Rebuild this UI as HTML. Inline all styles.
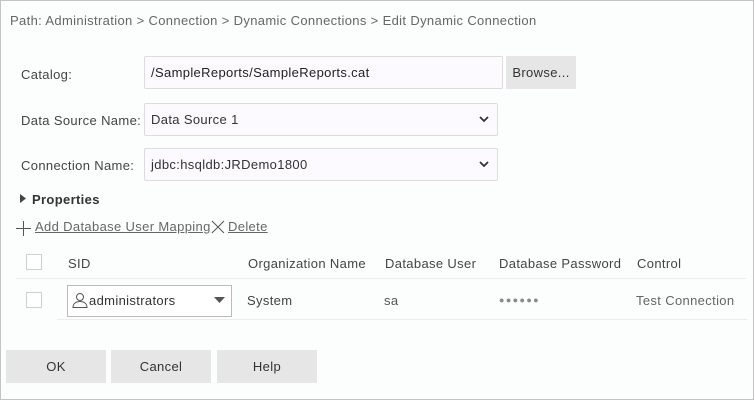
<!DOCTYPE html>
<html><head><meta charset="utf-8"><style>
*{box-sizing:border-box;margin:0;padding:0}
body{width:755px;height:401px;background:#fff;font-family:"Liberation Sans",sans-serif;font-size:13px;letter-spacing:.35px;color:#444;position:relative;overflow:hidden}
#f{position:absolute;left:0;top:0;width:754px;height:400px;border:1px solid #c4c4c4;background:#fcfefd}
.a{position:absolute;white-space:nowrap}
.in{position:absolute;border:1px solid #dcdcdc;background:#fcfaff;border-radius:2px;padding-left:6px;line-height:31px;color:#333}
.btn{position:absolute;background:#e6e6e6;text-align:center;line-height:33px;color:#333}
.cb{position:absolute;width:16px;height:16px;border:1px solid #cfcfcf;background:#fff}
.ln{position:absolute;height:1px;background:#ececec}
.chev{position:absolute;right:8px;top:12px}
.u{text-decoration:underline;color:#666}
</style></head><body><div id="f"></div>
<div class="a" style="left:10px;top:13px;color:#666">Path: Administration &gt; Connection &gt; Dynamic Connections &gt; Edit Dynamic Connection</div>
<div class="a" style="left:21px;top:67px">Catalog:</div>
<div class="in" style="left:144px;top:56px;width:359px;height:33px;color:#222">/SampleReports/SampleReports.cat</div>
<div class="btn" style="left:506px;top:56px;width:70px;height:33px">Browse...</div>
<div class="a" style="left:21px;top:113px">Data Source Name:</div>
<div class="in" style="left:144px;top:103px;width:354px;height:33px">Data Source 1<svg class="chev" width="10" height="7" viewBox="0 0 10 7"><path d="M1 1l4 4 4-4" fill="none" stroke="#333" stroke-width="1.8"/></svg></div>
<div class="a" style="left:21px;top:158px">Connection Name:</div>
<div class="in" style="left:144px;top:148px;width:354px;height:33px">jdbc:hsqldb:JRDemo1800<svg class="chev" width="10" height="7" viewBox="0 0 10 7"><path d="M1 1l4 4 4-4" fill="none" stroke="#333" stroke-width="1.8"/></svg></div>
<svg class="a" style="left:20px;top:194px" width="6" height="9"><path d="M0 0L6 4.5 0 9z" fill="#444"/></svg>
<div class="a" style="left:32px;top:192px;font-weight:bold;color:#333">Properties</div>
<svg class="a" style="left:15px;top:220px" width="17" height="16"><path d="M1 8.5h15M8.5 1v15" stroke="#555" stroke-width="1"/></svg>
<div class="a u" style="left:35px;top:219px">Add Database User Mapping</div>
<svg class="a" style="left:211px;top:220px" width="14" height="14"><path d="M1 1l12 12M13 1L1 13" stroke="#555" stroke-width="1"/></svg>
<div class="a u" style="left:228px;top:219px">Delete</div>
<div class="cb" style="left:26px;top:254px"></div>
<div class="a" style="left:68px;top:256px">SID</div>
<div class="a" style="left:248px;top:256px">Organization Name</div>
<div class="a" style="left:385px;top:256px">Database User</div>
<div class="a" style="left:499px;top:256px">Database Password</div>
<div class="a" style="left:637px;top:256px">Control</div>
<div class="ln" style="left:16px;top:278px;width:730px"></div>
<div class="cb" style="left:26px;top:292px"></div>
<div class="a" style="left:67px;top:285px;width:165px;height:32px;border:1px solid #bbb;background:#fff"></div>
<svg class="a" style="left:72px;top:292px" width="16" height="16" viewBox="0 0 16 16"><circle cx="8" cy="5" r="3.5" fill="none" stroke="#555"/><path d="M1 15.5c0-4 3-6 7-6s7 2 7 6z" fill="none" stroke="#555"/></svg>
<div class="a" style="left:89px;top:293px;color:#333">administrators</div>
<svg class="a" style="left:214px;top:297px" width="11" height="6"><path d="M0 0h11L5.5 6z" fill="#555"/></svg>
<div class="a" style="left:247px;top:293px">System</div>
<div class="a" style="left:384px;top:293px;color:#555">sa</div>
<div class="a" style="left:499px;top:295px;color:#888;font-size:9px;letter-spacing:1.4px">●●●●●●</div>
<div class="a" style="left:636px;top:293px;color:#666">Test Connection</div>
<div class="ln" style="left:57px;top:319px;width:690px"></div>
<div class="btn" style="left:6px;top:350px;width:100px;height:33px">OK</div>
<div class="btn" style="left:111px;top:350px;width:100px;height:33px">Cancel</div>
<div class="btn" style="left:217px;top:350px;width:100px;height:33px">Help</div>
</body></html>
